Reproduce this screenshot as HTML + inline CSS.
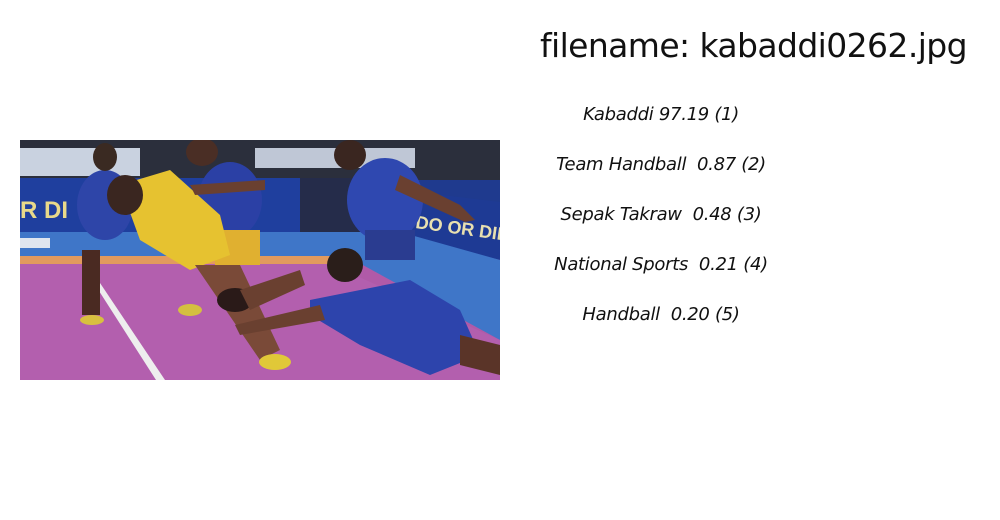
<!DOCTYPE html>
<html><head><meta charset="utf-8"><style>
body{margin:0;width:1000px;height:520px;background:#fff;position:relative;overflow:hidden;font-family:"Liberation Sans","DejaVu Sans",sans-serif}
.t{position:absolute;left:540px;top:26px;font-size:33px;color:#111;white-space:nowrap;font-family:"DejaVu Sans","Liberation Sans",sans-serif;letter-spacing:-0.6px}
.l{position:absolute;width:300px;left:511px;text-align:center;font-style:italic;font-size:18px;color:#111;font-family:"DejaVu Sans","Liberation Sans",sans-serif;letter-spacing:-0.3px}
svg{position:absolute;left:20px;top:140px}
</style></head><body>
<div class="t">filename: kabaddi0262.jpg</div>
<div class="l" style="top:104px">Kabaddi 97.19 (1)</div>
<div class="l" style="top:154px">Team Handball&nbsp; 0.87 (2)</div>
<div class="l" style="top:204px">Sepak Takraw&nbsp; 0.48 (3)</div>
<div class="l" style="top:254px">National Sports&nbsp; 0.21 (4)</div>
<div class="l" style="top:304px">Handball&nbsp; 0.20 (5)</div>
<svg width="480" height="240" viewBox="0 0 480 240">
<rect width="480" height="240" fill="#b05aa8"/>
<rect width="480" height="100" fill="#1f3a8e"/>
<rect width="480" height="40" fill="#2b2f3c"/>
<rect x="0" y="8" width="120" height="28" fill="#c9d2e0"/>
<rect x="235" y="8" width="160" height="20" fill="#bfc7d6"/>
<rect x="0" y="38" width="280" height="54" fill="#1f3f9e"/>
<rect x="280" y="38" width="100" height="54" fill="#252c4a"/>
<polygon points="380,50 480,62 480,120 380,96" fill="#1e3a94"/>
<text x="0" y="78" font-size="24" font-weight="bold" fill="#e8d98a" font-family="Liberation Sans">R DI</text>
<text x="395" y="88" font-size="18" font-weight="bold" fill="#e8e0b0" font-family="Liberation Sans" transform="rotate(8 395 88)">DO OR DIE R</text>
<polygon points="0,92 380,92 480,120 480,200 330,118 0,118" fill="#3f76c8"/>
<rect x="0" y="116" width="310" height="8" fill="#e29a5e"/>
<rect x="0" y="98" width="30" height="10" fill="#dfe5ef"/>
<polygon points="0,124 310,124 480,200 480,240 0,240" fill="#b35fae"/>
<polygon points="72,140 78,140 145,240 136,240" fill="#eee"/>
<ellipse cx="85" cy="65" rx="28" ry="35" fill="#2e45a8"/>
<rect x="62" y="110" width="18" height="65" fill="#4a2a22"/>
<ellipse cx="72" cy="180" rx="12" ry="5" fill="#d8c040"/>
<ellipse cx="85" cy="17" rx="12" ry="14" fill="#3a2a22"/>
<ellipse cx="210" cy="60" rx="32" ry="38" fill="#2b40a5"/>
<rect x="195" y="90" width="45" height="35" fill="#e0b030"/>
<ellipse cx="182" cy="12" rx="16" ry="14" fill="#4a2e25"/>
<ellipse cx="170" cy="170" rx="12" ry="6" fill="#d4c040"/>
<polygon points="100,45 150,30 200,75 210,115 170,130 120,100" fill="#e6c230"/>
<ellipse cx="105" cy="55" rx="18" ry="20" fill="#3a2620"/>
<polygon points="175,125 220,125 260,210 240,220" fill="#7a4a38"/>
<ellipse cx="215" cy="160" rx="18" ry="12" fill="#2a1a18"/>
<polygon points="220,150 280,130 285,145 230,170" fill="#6a4030"/>
<ellipse cx="255" cy="222" rx="16" ry="8" fill="#e0c838"/>
<polygon points="170,45 245,40 245,50 175,55" fill="#6a4030"/>
<ellipse cx="365" cy="60" rx="38" ry="42" fill="#2f48b0"/>
<rect x="345" y="90" width="50" height="30" fill="#2a3c90"/>
<ellipse cx="330" cy="15" rx="16" ry="15" fill="#3a2620"/>
<polygon points="380,35 440,65 455,80 445,82 375,50" fill="#6a4030"/>
<polygon points="290,160 390,140 440,170 460,215 410,235 340,205 290,175" fill="#2d44ac"/>
<ellipse cx="325" cy="125" rx="18" ry="17" fill="#2a1e1a"/>
<polygon points="215,185 300,165 305,180 220,195" fill="#6a4030"/>
<polygon points="440,195 480,205 480,235 440,225" fill="#5a3428"/>
</svg>
</body></html>
